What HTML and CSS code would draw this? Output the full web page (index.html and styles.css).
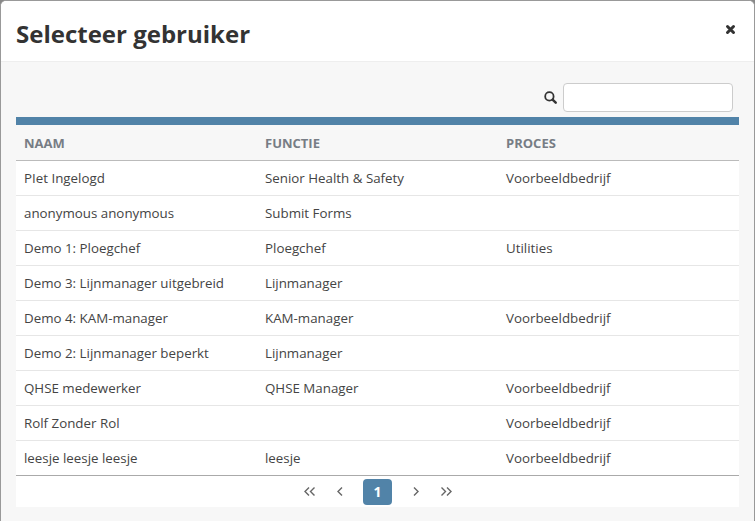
FILE: index.html
```html
<!DOCTYPE html>
<html lang="nl">
<head>
  <meta charset="UTF-8">
  <title>Selecteer gebruiker</title>
  <link rel="stylesheet" href="styles.css">
</head>
<body>
  <div class="modal">
    <div class="modal-header">
      <h1>Selecteer gebruiker</h1>
      <svg class="close" width="11" height="11" viewBox="0 0 11 11" aria-label="Sluiten">
        <path d="M2.5 2.5l6 6M8.5 2.5l-6 6" stroke="#333" stroke-width="3" stroke-linecap="round"/>
      </svg>
    </div>
    <div class="modal-body">
      <div class="search">
        <svg width="13" height="13" viewBox="0 0 13 13">
          <circle cx="5.4" cy="5.4" r="4.2" fill="none" stroke="#333" stroke-width="1.8"/>
          <path d="M8.6 8.6l3.1 3.1" stroke="#333" stroke-width="2.4" stroke-linecap="round"/>
        </svg>
        <input type="text">
      </div>
      <div class="table-wrap">
        <table>
          <thead>
            <tr><th>NAAM</th><th>FUNCTIE</th><th>PROCES</th></tr>
          </thead>
          <tbody>
            <tr><td>PIet Ingelogd</td><td>Senior Health &amp; Safety</td><td>Voorbeeldbedrijf</td></tr>
            <tr><td>anonymous anonymous</td><td>Submit Forms</td><td></td></tr>
            <tr><td>Demo 1: Ploegchef</td><td>Ploegchef</td><td>Utilities</td></tr>
            <tr><td>Demo 3: Lijnmanager uitgebreid</td><td>Lijnmanager</td><td></td></tr>
            <tr><td>Demo 4: KAM-manager</td><td>KAM-manager</td><td>Voorbeeldbedrijf</td></tr>
            <tr><td>Demo 2: Lijnmanager beperkt</td><td>Lijnmanager</td><td></td></tr>
            <tr><td>QHSE medewerker</td><td>QHSE Manager</td><td>Voorbeeldbedrijf</td></tr>
            <tr><td>Rolf Zonder Rol</td><td></td><td>Voorbeeldbedrijf</td></tr>
            <tr><td>leesje leesje leesje</td><td>leesje</td><td>Voorbeeldbedrijf</td></tr>
          </tbody>
        </table>
        <div class="pager">
          <a href="#" aria-label="Eerste"><svg width="11" height="9" viewBox="0 0 11 9"><path d="M5 .5L1 4.5l4 4M10.5 .5l-4 4 4 4" class="chev"/></svg></a>
          <a href="#" aria-label="Vorige"><svg width="6" height="9" viewBox="0 0 6 9"><path d="M5 .5L1 4.5l4 4" class="chev"/></svg></a>
          <a href="#" class="active">1</a>
          <a href="#" aria-label="Volgende"><svg width="6" height="9" viewBox="0 0 6 9"><path d="M1 .5l4 4-4 4" class="chev"/></svg></a>
          <a href="#" aria-label="Laatste"><svg width="11" height="9" viewBox="0 0 11 9"><path d="M.5 .5l4 4-4 4M6 .5l4 4-4 4" class="chev"/></svg></a>
        </div>
      </div>
    </div>
  </div>
</body>
</html>
```

FILE: styles.css
```css
html, body {
  margin: 0;
  height: 100%;
  background: #888;
}
body {
  font-family: "Open Sans", sans-serif;
  font-size: 13.33px;
  color: #444;
  overflow: hidden;
}
.modal {
  height: 521px;
  box-sizing: border-box;
  border: 1px solid #999;
  border-bottom: none;
  border-radius: 6px 6px 0 0;
  background: #f7f7f7;
  overflow: hidden;
}
.modal-header {
  height: 61px;
  box-sizing: border-box;
  background: #fff;
  border-bottom: 1px solid #eee;
  padding: 5px 15px 0;
  display: flex;
  justify-content: space-between;
  align-items: center;
}
.modal-header h1 {
  margin: 0;
  font-size: 24px;
  font-weight: 700;
  color: #333;
}
.close {
  margin: 0 3px 8px 0;
}
.modal-body {
  padding: 21px 15px 0;
}
.search {
  display: flex;
  justify-content: flex-end;
  align-items: center;
  gap: 6px;
  padding-right: 6px;
  margin-bottom: 5px;
}
.search input {
  width: 170px;
  height: 29px;
  box-sizing: border-box;
  border: 1px solid #ccc;
  border-radius: 4px;
  background: #fff;
}
.table-wrap {
  border-top: 8px solid #5183a8;
}
table {
  width: 100%;
  border-collapse: collapse;
  table-layout: fixed;
}
th {
  height: 35px;
  padding: 0 8px;
  text-align: left;
  font-size: 13px;
  font-weight: 700;
  color: #777d85;
  border-bottom: 1px solid #bbb;
}
td {
  height: 34px;
  padding: 0 8px;
  background: #fff;
  border-bottom: 1px solid #e6e6e6;
}
tbody tr:last-child td {
  border-bottom: 1px solid #aaa;
}
.pager {
  height: 31px;
  background: #fff;
  display: flex;
  justify-content: center;
  align-items: center;
}
.pager a {
  padding: 0 11px;
  display: flex;
  align-items: center;
  text-decoration: none;
}
.pager a.active {
  height: 26px;
  margin: 0 9.5px;
  box-sizing: border-box;
  width: 29px;
  justify-content: center;
  background: #5183a8;
  color: #fff;
  font-size: 14px;
  font-weight: 700;
  border-radius: 4px;
}
.chev {
  fill: none;
  stroke: #666;
  stroke-width: 1.4;
}
```
